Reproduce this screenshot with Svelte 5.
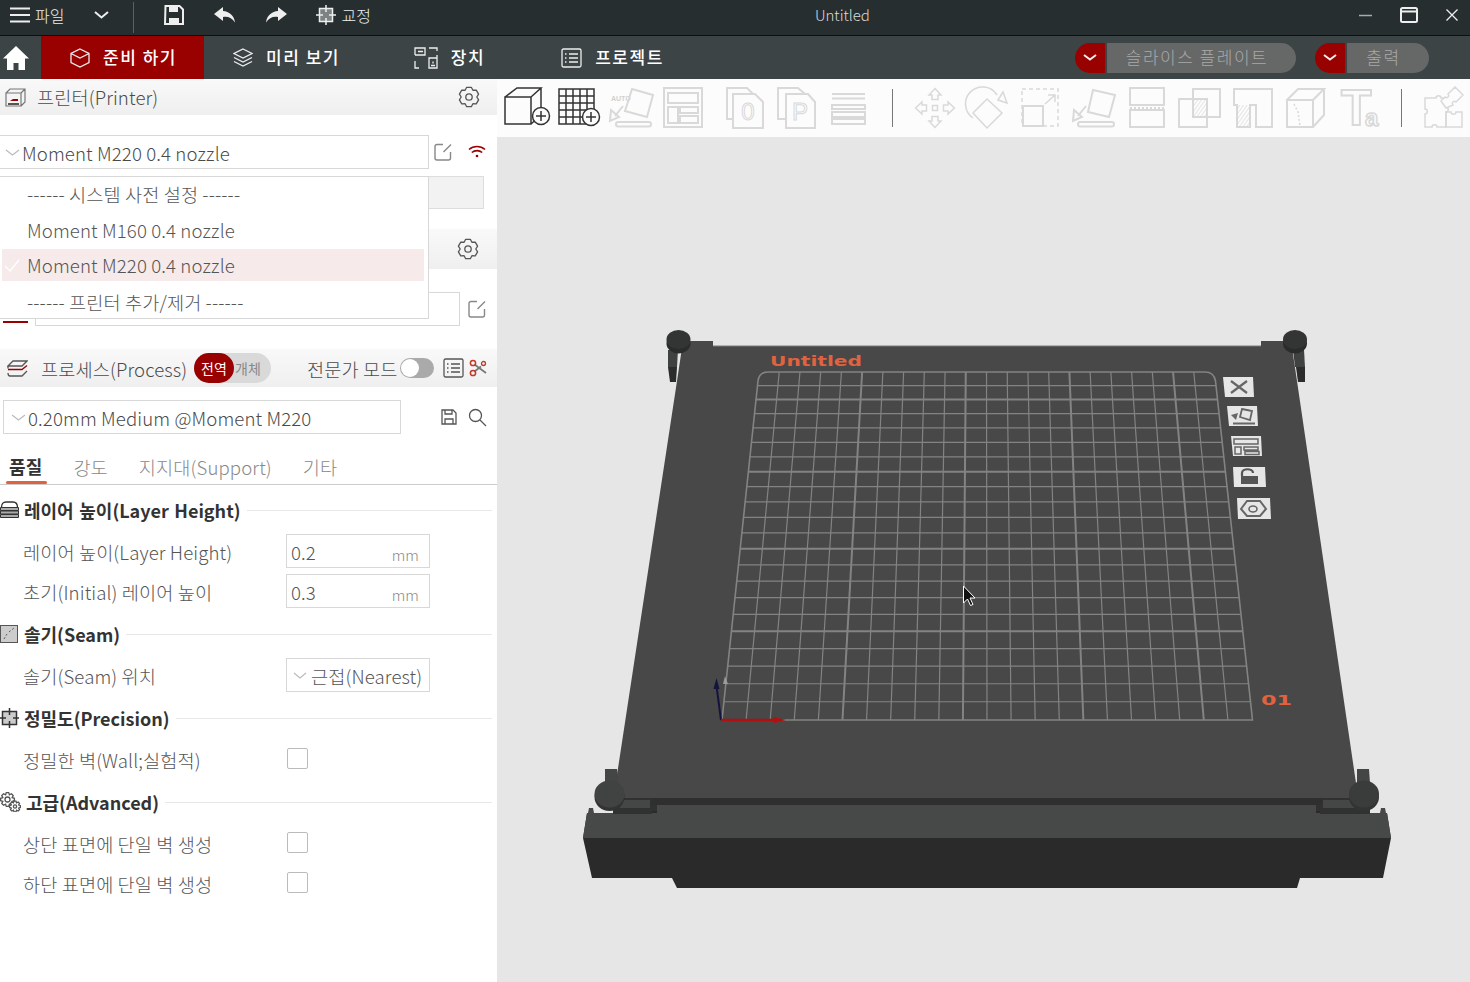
<script lang="ts">
  // build plate grid, perspective corrected between the far and near edge
  const far = { y: 372, l: 758.5, r: 1214.5 };
  const near = { y: 720, l: 722, r: 1252 };
  const cells = 22;
  const zf = 1 / (far.r - far.l);
  const zn = 1 / (near.r - near.l);

  function persp(a: number, b: number, s: number) {
    return ((1 - s) * a * zf + s * b * zn) / ((1 - s) * zf + s * zn);
  }

  const rows = Array.from({ length: cells - 1 }, (_, n) => {
    const s = (n + 1) / cells;
    return {
      y: persp(far.y, near.y, s),
      x1: persp(far.l, near.l, s),
      x2: persp(far.r, near.r, s),
      major: (cells - n - 1) % 5 === 0,
    };
  });
  const cols = Array.from({ length: cells - 1 }, (_, n) => {
    const s = (n + 1) / cells;
    return {
      x1: far.l + (far.r - far.l) * s,
      x2: near.l + (near.r - near.l) * s,
      major: (n + 1) % 5 === 0,
    };
  });

  function gear(cx: number, cy: number, R: number, r: number, n = 6) {
    let d = "";
    for (let i = 0; i < n; i++) {
      const a = (i * 2 * Math.PI) / n - Math.PI / 2;
      const w = Math.PI / n;
      const pts = [
        [r, a - w],
        [R, a - w * 0.45],
        [R, a + w * 0.45],
      ];
      pts.forEach(([rad, t], k) => {
        d += `${i === 0 && k === 0 ? "M" : "L"}${(cx + rad * Math.cos(t)).toFixed(2)} ${(cy + rad * Math.sin(t)).toFixed(2)} `;
      });
    }
    return d + "Z";
  }

  const presets = [
    { label: "------ 시스템 사전 설정 ------" },
    { label: "Moment M160 0.4 nozzle" },
    { label: "Moment M220 0.4 nozzle", selected: true },
    { label: "------ 프린터 추가/제거 ------" },
  ];

  const tabs = ["품질", "강도", "지지대(Support)", "기타"];
  const moveAngles = [0, 90, 180, 270];
</script>

{#snippet editIcon()}
  <svg class="ic" width="20" height="20" viewBox="0 0 20 20">
    <path class="gr" d="M10 2.5H4a2 2 0 0 0-2 2V16a2 2 0 0 0 2 2h11.5a2 2 0 0 0 2-2V10M18 2.5 10.5 10" />
  </svg>
{/snippet}

{#snippet gearIcon()}
  <svg class="ic" width="22" height="22" viewBox="0 0 22 22">
    <path class="dk round" d={gear(11, 11, 10, 7.8)} />
    <circle class="dk" cx="11" cy="11" r="3.2" />
  </svg>
{/snippet}

<div class="app">
  <header class="titlebar">
    <svg class="ic menu" width="20" height="16" viewBox="0 0 20 16">
      <path class="wh" d="M0 1.5H20M0 8H20M0 14.5H20" />
    </svg>
    <span class="file">파일</span>
    <svg class="ic file-arrow" width="15" height="8" viewBox="0 0 15 8">
      <path class="wh" d="M1 1l6.5 5.5L14 1" />
    </svg>
    <span class="title-sep"></span>
    <svg class="ic t-save" width="20" height="20" viewBox="0 0 20 20">
      <path class="wh" d="M1.5 1h14L19 4.5V19H1z" />
      <path d="M5 1h9v6H5zM5 13h10v6H5z" fill="#eee" />
    </svg>
    <svg class="ic t-undo" width="22" height="16" viewBox="0 0 22 16">
      <path d="M9 0 0 7l9 7v-4c5-1 9 1 12 5.5C20 8 15 4.5 9 4z" fill="#eee" />
    </svg>
    <svg class="ic t-redo" width="22" height="16" viewBox="0 0 22 16">
      <path d="M13 0l9 7-9 7v-4C8 9 4 11 1 15.5 2 8 7 4.5 13 4z" fill="#eee" />
    </svg>
    <svg class="ic t-cal" width="20" height="20" viewBox="0 0 20 20">
      <rect x="3.5" y="3.5" width="13" height="13" fill="#7d8283" stroke="#eee" stroke-width="1.5" />
      <path d="M10 0v7M10 13v7M0 10h7M13 10h7" stroke="#eee" stroke-width="1.5" />
    </svg>
    <span class="cal">교정</span>
    <span class="doc">Untitled</span>
    <div class="win">
      <svg class="ic" width="13" height="3" viewBox="0 0 13 3"><path d="M0 1.5H13" stroke="#aaa" stroke-width="1.5" /></svg>
      <svg class="ic" width="18" height="16" viewBox="0 0 18 16">
        <rect x="1" y="1" width="16" height="14" rx="1.5" class="wh" />
        <path d="M1 4.5H17" class="wh" />
      </svg>
      <svg class="ic" width="12" height="12" viewBox="0 0 12 12"><path class="wh thin" d="M.5.5l11 11M11.5.5l-11 11" /></svg>
    </div>
  </header>

  <nav class="tabbar">
    <div class="home">
      <svg class="ic" width="26" height="24" viewBox="0 0 26 24">
        <path d="M13 0 0 12.5h4V24h6.5v-7h5v7H22V12.5h4z" fill="#fff" />
      </svg>
    </div>
    <div class="tab active">
      <svg class="ic" width="20" height="20" viewBox="0 0 20 20">
        <path class="wh thin" d="M10 1 19 5.5V14.5L10 19 1 14.5V5.5zM1 5.5 10 10 19 5.5" />
      </svg>
      <span>준비 하기</span>
    </div>
    <div class="tab">
      <svg class="ic" width="20" height="20" viewBox="0 0 20 20">
        <path class="wh thin" d="M10 1 19 5.5 10 10 1 5.5zM1 9.5 10 14 19 9.5M1 13.5 10 18 19 13.5" />
      </svg>
      <span>미리 보기</span>
    </div>
    <div class="tab">
      <svg class="ic" width="24" height="22" viewBox="0 0 24 22">
        <path class="wh thin" d="M1 8V1h10v7H1M4 4.5h5M15 1h8v3M1 14v7h4M23 8v13H15V11h8M17 18.5h4M19 14.5v2" />
      </svg>
      <span>장치</span>
    </div>
    <div class="tab">
      <svg class="ic" width="21" height="20" viewBox="0 0 21 20">
        <rect class="wh thin" x="1" y="1" width="19" height="18" rx="1.5" />
        <path class="wh thin" d="M4 6h1.5M8 6h9M4 10h1.5M8 10h9M4 14h1.5M8 14h9" />
      </svg>
      <span>프로젝트</span>
    </div>
    <div class="actions">
      <div class="split slice">
        <span class="split-arrow"><svg class="ic" width="14" height="7" viewBox="0 0 14 7"><path class="wh" d="M1 1l6 4.5L13 1" /></svg></span>
        <span class="split-label">슬라이스 플레이트</span>
      </div>
      <div class="split print">
        <span class="split-arrow"><svg class="ic" width="14" height="7" viewBox="0 0 14 7"><path class="wh" d="M1 1l6 4.5L13 1" /></svg></span>
        <span class="split-label">출력</span>
      </div>
    </div>
  </nav>

  <div class="main">
    <aside class="sidebar">
      <div class="section-head printer-head">
        <svg class="ic" width="21" height="19" viewBox="0 0 21 19">
          <path class="gr2" d="M1 5h15v13H1zM1 5l4-4h15v13l-4 4M16 5l4-4" />
          <path d="M3 15h11v2H3z" fill="#555" />
          <path d="M5 13l3-2h5v2z" fill="#990000" />
        </svg>
        <span class="head-text">프린터(Printer)</span>
        <span class="head-gear">{@render gearIcon()}</span>
      </div>

      <div class="printer-row">
        <div class="select printer-select">
          <svg class="ic chev" width="15" height="7" viewBox="0 0 15 7"><path class="lg" d="M1 1l6.5 5L14 1" /></svg>
          <span>Moment M220 0.4 nozzle</span>
        </div>
        <span class="edit-slot">{@render editIcon()}</span>
        <svg class="ic wifi" width="18" height="13" viewBox="0 0 18 13">
          <path d="M1 4.5C5.5.5 12.5.5 17 4.5M3.8 7.5c3-2.5 7.4-2.5 10.4 0" fill="none" stroke="#990000" stroke-width="1.6" />
          <circle cx="9" cy="11" r="1.3" fill="#990000" />
        </svg>
      </div>

      <div class="plate-row"></div>

      <div class="section-head filament-head">
        <span class="head-gear">{@render gearIcon()}</span>
      </div>

      <div class="filament-row">
        <span class="swatch"></span>
        <div class="select filament-select"></div>
        <span class="edit-slot">{@render editIcon()}</span>
      </div>

      <div class="section-head process-head">
        <svg class="ic" width="21" height="18" viewBox="0 0 21 18">
          <path class="dk" d="M1 7 6 2h14l-5 5zM1 7v2.5" />
          <path d="M1 10.5h14l5-4" fill="none" stroke="#990000" stroke-width="1.4" />
          <path class="dk" d="M1 14c0 2 1 3 2 3h12l5-5" />
        </svg>
        <span class="head-text">프로세스(Process)</span>
        <div class="scope">
          <span class="scope-on">전역</span>
          <span class="scope-off">개체</span>
        </div>
        <span class="expert">전문가 모드</span>
        <span class="switch"><span class="knob"></span></span>
        <svg class="ic list" width="21" height="20" viewBox="0 0 21 20">
          <rect class="dk" x="1" y="1" width="19" height="18" rx="1.5" />
          <path class="dk" d="M4 6h1.5M8 6h9M4 10h1.5M8 10h9M4 14h1.5M8 14h9" />
        </svg>
        <svg class="ic" width="18" height="18" viewBox="0 0 18 18">
          <path d="M5.5 5.5 17 14M5.5 12.5 12 7.5" stroke="#777" stroke-width="1.6" fill="none" />
          <circle cx="4" cy="4" r="2.6" fill="none" stroke="#c0392b" stroke-width="1.5" />
          <circle cx="4" cy="14" r="2.6" fill="none" stroke="#c0392b" stroke-width="1.5" />
          <circle cx="14.5" cy="4.5" r="2" fill="none" stroke="#c0392b" stroke-width="1.3" />
        </svg>
      </div>

      <div class="preset-row">
        <div class="select preset-select">
          <svg class="ic chev" width="15" height="7" viewBox="0 0 15 7"><path class="lg" d="M1 1l6.5 5L14 1" /></svg>
          <span>0.20mm Medium @Moment M220</span>
        </div>
        <svg class="ic p-save" width="16" height="16" viewBox="0 0 16 16">
          <path class="dk" d="M1 1h11l3 3v11H1zM4 1v4h7V1M4 15v-5h8v5" />
        </svg>
        <svg class="ic p-search" width="19" height="19" viewBox="0 0 19 19">
          <circle class="dk" cx="7.5" cy="7.5" r="6" />
          <path class="dk" d="M12 12l6 6" />
        </svg>
      </div>

      <div class="tabs">
        {#each tabs as t, i}
          <span class="param-tab" class:on={i === 0}>{t}</span>
        {/each}
      </div>

      <div class="params">
        <section class="group">
          <h3>
            <svg class="ic" width="19" height="18" viewBox="0 0 19 18">
              <path class="dk strong" d="M1.5 6.5C1.5 3 3 1 6 1h7c3 0 4.5 2 4.5 5.5" />
              <path class="band" d="M.5 6.5h18v3H.5zM.5 10h18v3H.5zM.5 13.5h18v3H.5z" />
            </svg>
            <span>레이어 높이(Layer Height)</span><i></i>
          </h3>
          <div class="row">
            <label for="lh">레이어 높이(Layer Height)</label>
            <div class="field" id="lh"><span>0.2</span><small>mm</small></div>
          </div>
          <div class="row">
            <label for="ilh">초기(Initial) 레이어 높이</label>
            <div class="field" id="ilh"><span>0.3</span><small>mm</small></div>
          </div>
        </section>

        <section class="group">
          <h3>
            <svg class="ic" width="19" height="18" viewBox="0 0 19 18">
              <rect x=".5" y=".5" width="17" height="17" fill="#ccc" stroke="#555" />
              <path d="M4 14 7 9M9 7l5-4" stroke="#555" stroke-dasharray="2 2" fill="none" />
            </svg>
            <span>솔기(Seam)</span><i></i>
          </h3>
          <div class="row">
            <label for="seam">솔기(Seam) 위치</label>
            <div class="field combo" id="seam">
              <svg class="ic" width="14" height="7" viewBox="0 0 14 7"><path class="lg" d="M1 1l6 5 6-5" /></svg>
              <span>근접(Nearest)</span>
            </div>
          </div>
        </section>

        <section class="group">
          <h3>
            <svg class="ic" width="19" height="20" viewBox="0 0 19 20">
              <rect x="2.5" y="3.5" width="14" height="13" fill="#ccc" stroke="#333" stroke-width="1.5" />
              <path d="M9.5 0v7M9.5 13v7M0 10h6M13 10h6" stroke="#333" stroke-width="1.5" />
            </svg>
            <span>정밀도(Precision)</span><i></i>
          </h3>
          <div class="row">
            <label for="pw">정밀한 벽(Wall;실험적)</label>
            <span class="check" id="pw"></span>
          </div>
        </section>

        <section class="group">
          <h3>
            <svg class="ic adv" width="21" height="20" viewBox="0 0 21 20">
              <path class="dk" d={gear(7.5, 7.5, 7, 5, 8)} />
              <circle class="dk" cx="7.5" cy="7.5" r="2.5" />
              <path class="dk white" d={gear(15, 14.5, 5.5, 4, 8)} />
              <circle class="dk" cx="15" cy="14.5" r="1.6" />
            </svg>
            <span>고급(Advanced)</span><i></i>
          </h3>
          <div class="row">
            <label for="top">상단 표면에 단일 벽 생성</label>
            <span class="check" id="top"></span>
          </div>
          <div class="row">
            <label for="bottom">하단 표면에 단일 벽 생성</label>
            <span class="check" id="bottom"></span>
          </div>
        </section>
      </div>

      <ul class="dropdown">
        {#each presets as p}
          <li class:selected={p.selected}>
            {#if p.selected}
              <svg class="ic tick" width="16" height="13" viewBox="0 0 16 13"><path d="M1 7l5 5L15 1" fill="none" stroke="#fff" stroke-width="1.3" /></svg>
            {/if}
            <span>{p.label}</span>
          </li>
        {/each}
      </ul>
    </aside>

    <div class="workspace">
      <div class="toolbar">
        <svg class="tool" viewBox="0 0 52 44">
          <path class="k" d="M3 11h26v27H3zM3 11l12-9h24l-10 9M29 38l10-9V2" />
          <circle class="k white" cx="39" cy="30" r="8.5" />
          <path class="k" d="M34 30h10M39 25v10" />
        </svg>
        <svg class="tool" viewBox="0 0 52 44">
          <path class="k" d="M5 3h35v35H5zM12 3v35M19 3v35M26 3v35M33 3v35M5 10h35M5 17h35M5 24h35M5 31h35" />
          <circle class="k white" cx="37" cy="31" r="8.5" />
          <path class="k" d="M32 31h10M37 26v10" />
        </svg>
        <svg class="tool" viewBox="0 0 52 44">
          <text class="auto" x="5" y="15">AUTO</text>
          <path class="d" d="M26 3l21 6-6 22-22-6z" />
          <path class="d" d="M17 20 9 30" />
          <path class="d" d="M5 24l-1 11 9-4z" />
          <rect class="d" x="10" y="36" width="35" height="4.5" rx="2.2" />
        </svg>
        <svg class="tool" viewBox="0 0 52 44">
          <rect class="d" x="6" y="2" width="38" height="39" />
          <path class="d" d="M10 7h30v10H10zM10 21h10v16H10zM22 21h18v6H22zM22 30h18v7H22z" />
        </svg>
        <svg class="tool group-2" viewBox="0 0 52 44">
          <path class="d" d="M15 33H9V2h20l6 6" />
          <path class="d paper" d="M15 8h22l8 8v26H15z" />
          <text class="letter" x="30" y="34">0</text>
        </svg>
        <svg class="tool" viewBox="0 0 52 44">
          <path class="d" d="M15 33H8V2h20l7 6" />
          <path class="d paper" d="M16 8h22l7 8v26H16z" />
          <text class="letter" x="30" y="34">P</text>
        </svg>
        <svg class="tool" viewBox="0 0 52 44">
          <path class="d" d="M10 8h33M10 12.5h33M10 19h33v4H10zM10 26h33v5H10zM10 33h33v5H10z" />
        </svg>
        <span class="tool-sep"></span>
        <svg class="tool after-sep" viewBox="0 0 52 44">
          {#each moveAngles as a}
            <path class="d fine" d="M26 2.5l6 6.5h-3v4.5h-6V9h-3z" transform="rotate({a} 26 22)" />
          {/each}
          <rect class="d fine" x="23.5" y="19.5" width="5" height="5" />
        </svg>
        <svg class="tool second-set" viewBox="0 0 52 44">
          <defs>
            <pattern id="hatch" width="3" height="3" patternUnits="userSpaceOnUse" patternTransform="rotate(35)">
              <path d="M0 0V3" stroke="#cfcfcf" stroke-width="1" />
            </pattern>
          </defs>
          <path class="d fine" d="M11 32A17 17 0 1 1 35 9" />
          <path class="d fine" d="M36 14l5-8 4 11z" />
          <path class="d fine" d="M25 13 40 27 25 42 11 27z" />
        </svg>
        <svg class="tool second-set" viewBox="0 0 52 44">
          <path class="d dash" d="M7 3h36v37H7z" />
          <rect class="d" x="8" y="20" width="20" height="20" />
          <path class="d fine" d="M30 18l10-9M33 9h7v7" />
        </svg>
        <svg class="tool second-set" viewBox="0 0 52 44">
          <path class="d" d="M25 4l22 5-6 22-21-5z" />
          <path class="d" d="M18 20 10 30" />
          <path class="d" d="M6 24l-1 11 9-4z" />
          <rect class="d" x="10" y="36" width="36" height="4.5" rx="2.2" />
        </svg>
        <svg class="tool second-set" viewBox="0 0 52 44">
          <rect class="d" x="9" y="2" width="34" height="17" />
          <rect class="d" x="9" y="24" width="34" height="17" />
          <path class="d dots" d="M9 22h34" />
        </svg>
        <svg class="tool second-set" viewBox="0 0 52 44">
          <rect class="d" x="19" y="3" width="27" height="28" />
          <rect class="d" x="5" y="13" width="28" height="28" />
          <path d="M19 13h14v18H19z" fill="url(#hatch)" />
        </svg>
        <svg class="tool second-set" viewBox="0 0 52 44">
          <path class="d" d="M7 3h38v38H29V19h-6v22H10V19H7z" />
          <path d="M10 19h13v22H10z" fill="url(#hatch)" />
        </svg>
        <svg class="tool second-set" viewBox="0 0 52 44">
          <path class="d" d="M7 14h26v27H7zM7 14 18 3h26L33 14M33 41 44 29V3" />
          <path class="d dots fine" d="M14 18l4 8 2 14" />
        </svg>
        <svg class="tool second-set tall" viewBox="0 -10 52 64">
          <text class="big-t" x="8" y="39">T</text>
          <text class="small-a" x="32" y="40">a</text>
        </svg>
        <span class="tool-sep second"></span>
        <svg class="tool after-sep" viewBox="0 0 52 44">
          <path class="d fine" d="M7 12h11c0-3 5-3 5 0h5v9c3 0 3 5 0 5v15H19c0-3-5-3-5 0H7V28c3 0 3-5 0-5z" />
          <path class="d fine paper" d="M28 22 23 15l4-4c2 2 5-1 3-3l7-7 8 8-7 7c-2-2-5 1-3 3z" />
          <path class="d fine" d="M28 41V26h5c0 3 5 3 5 0h6v15z" />
        </svg>
      </div>

      <svg class="scene" viewBox="497 137 973 845" preserveAspectRatio="none">
        <!-- back stems -->
        <path d="M668 350h10l-1 17h-9z" fill="#404241" />
        <path d="M668 367h9l-1 15h-6z" fill="#2b2c2c" />
        <path d="M1293 350h11l1 17h-10z" fill="#404241" />
        <path d="M1296 367h9v15h-7z" fill="#2b2c2c" />

        <!-- base -->
        <path d="M587 813h65v-5h5v-3h659v3h4v5h67l4 25-8 40h-83l-3 10H677l-5-10h-80l-9-40z" fill="#292a29" />
        <path d="M587 813h70v-8h659v8h71l4 25H583z" fill="#474948" />
        <path d="M588 813l1-5h4l1 5zM1380 813l1-5h4l1 5z" fill="#474948" />

        <!-- bed plate -->
        <path d="M613 798h44v13h-5v3h-39zM1316 798h54v16h-50v-3h-4z" fill="#303231" />
        <path d="M651 798h671v7H651z" fill="#2e2f2e" />
        <path d="M620 800h30v8h-30zM1323 800h32v8h-32z" fill="#454746" />
        <path d="M683 341h30v5h548v-5h30l6 40 60 409v8H617v-23l60-394z" fill="#474847" />
        <path d="M713 346H1261" stroke="#7a7b7a" stroke-width="1" />

        <!-- knobs -->
        <ellipse cx="678.5" cy="343.5" rx="12" ry="10" fill="#2a2b2b" />
        <ellipse cx="678.5" cy="339.5" rx="12" ry="9.5" fill="#333534" />
        <ellipse cx="1295" cy="343.5" rx="12" ry="10" fill="#2a2b2b" />
        <ellipse cx="1295" cy="339.5" rx="12" ry="9.5" fill="#333534" />
        <path d="M605 769h12l2 14h-14zM1357 769h12l1 14h-13z" fill="#444645" />
        <ellipse cx="609.5" cy="797" rx="15" ry="14" fill="#323433" />
        <ellipse cx="609.5" cy="794" rx="15" ry="13.5" fill="#414342" />
        <ellipse cx="1364" cy="797" rx="15" ry="14" fill="#323433" />
        <ellipse cx="1364" cy="794" rx="15" ry="13.5" fill="#3a3c3b" />

        <!-- grid -->
        <g fill="none" stroke="#828482">
          {#each rows as r}
            <path d="M{r.x1} {r.y}H{r.x2}" stroke-width={r.major ? 2 : 1.2} />
          {/each}
          {#each cols as c}
            <path d="M{c.x1} {far.y}L{c.x2} {near.y}" stroke-width={c.major ? 2 : 1.2} />
          {/each}
          <path d="M768 372H1205Q1214 372 1215.5 381L1252.5 720H722L758 381Q759 372 768 372Z" stroke-width="1.6" />
        </g>

        <text class="plate-name" x="770" y="366" textLength="92" lengthAdjust="spacingAndGlyphs">Untitled</text>
        <text class="plate-name" x="1261" y="705" textLength="31" lengthAdjust="spacingAndGlyphs">01</text>

        <!-- axes -->
        <path d="M725 676l-2 8h5z" fill="#9a9c9b" />
        <path d="M721 720 716.5 686" stroke="#14143c" stroke-width="2" />
        <path d="M716.5 678l-3 11h6z" fill="#14143c" />
        <path d="M721 720H778" stroke="#b40f0f" stroke-width="2.4" />
        <path d="M786 720l-12-3v6z" fill="#b40f0f" />

        <!-- plate buttons -->
        <path d="M1223 377h30l1 20h-29z" fill="#e6e6e6" />
        <path d="M1231 381l16 12M1247 381l-16 12" stroke="#666" stroke-width="2.2" />
        <path d="M1227 406h30l1 20h-29z" fill="#e6e6e6" />
        <path d="M1242 409l10 2-2 9-10-3zM1233 423.5h22" stroke="#666" stroke-width="1.8" fill="none" />
        <path d="M1231 415l7-2-2 7z" fill="#666" />
        <path d="M1231 436h30l1 20h-29z" fill="#e6e6e6" />
        <path d="M1234 439h24v5h-24zM1235 447h6v7h-6zM1244 447h14v3h-14zM1245 451.5h14v3h-14z" stroke="#666" stroke-width="1.5" fill="none" />
        <path d="M1233 467h32l1 20h-32z" fill="#e6e6e6" />
        <path d="M1242 476v-3c0-5 11-5 11 0" stroke="#555" stroke-width="2.2" fill="none" />
        <path d="M1241 476h17v8h-17z" fill="#555" />
        <path d="M1237 498h33l1 21h-33z" fill="#e6e6e6" />
        <path d="M1241 509l6-8h13l6 8-6 7h-13z" stroke="#666" stroke-width="2" fill="none" />
        <ellipse cx="1253" cy="509" rx="4" ry="3" stroke="#666" stroke-width="1.6" fill="none" />

        <!-- mouse pointer -->
        <path d="M963.5 586v17l4-4 3 6.5 2.5-1-3-6.5h5z" fill="#111" stroke="#fff" stroke-width="1" />
      </svg>
    </div>
  </div>
</div>

<style>
  :global(body) {
    margin: 0;
    overflow: hidden;
  }
  .app {
    width: 1470px;
    height: 982px;
    display: flex;
    flex-direction: column;
    overflow: hidden;
    background: #fff;
    color: #4a4a4a;
    font-family: "Noto Sans CJK KR", "Noto Sans", sans-serif;
    font-weight: 300;
  }
  .ic {
    display: block;
    flex-shrink: 0;
  }
  .wh {
    fill: none;
    stroke: #eee;
    stroke-width: 2;
  }
  .wh.thin {
    stroke-width: 1.3;
  }
  .dk {
    fill: none;
    stroke: #555;
    stroke-width: 1.3;
  }
  .dk.strong {
    stroke: #333;
  }
  .white {
    fill: #fff;
  }
  .band {
    fill: #aaa;
    stroke: #333;
    stroke-width: 1;
  }
  .round {
    stroke-linejoin: round;
  }
  .gr {
    fill: none;
    stroke: #888;
    stroke-width: 1.4;
  }
  .gr2 {
    fill: #f4f4f4;
    stroke: #777;
    stroke-width: 1.2;
  }
  .lg {
    fill: none;
    stroke: #bbb;
    stroke-width: 1.2;
  }

  .titlebar {
    box-sizing: border-box;
    height: 36px;
    flex-shrink: 0;
    padding-bottom: 5px;
    border-bottom: 1px solid #0d0f10;
    background: #272e30;
    display: flex;
    align-items: center;
    color: #eee;
    font-size: 16px;
  }
  .menu {
    margin-left: 10px;
  }
  .file {
    margin-left: 5px;
  }
  .file-arrow {
    margin-left: 30px;
  }
  .title-sep {
    width: 1px;
    height: 31px;
    margin: 5px 0 0 24px;
    background: #5a6163;
  }
  .t-save {
    margin-left: 30px;
  }
  .t-undo {
    margin-left: 30px;
  }
  .t-redo {
    margin-left: 29px;
  }
  .t-cal {
    margin-left: 29px;
  }
  .cal {
    margin-left: 5px;
  }
  .doc {
    margin-left: 444px;
    padding-bottom: 1px;
    font-size: 15px;
    color: #ddd;
  }
  .win {
    margin-left: auto;
    margin-right: 12px;
    display: flex;
    align-items: center;
    gap: 28px;
  }

  .tabbar {
    height: 43px;
    flex-shrink: 0;
    background: #3c4446;
    display: flex;
    align-items: stretch;
  }
  .home {
    width: 41px;
    display: flex;
    align-items: center;
    justify-content: center;
    padding-right: 9px;
    box-sizing: border-box;
  }
  .tab {
    box-sizing: border-box;
    width: 163px;
    padding-left: 2px;
    display: flex;
    align-items: center;
    justify-content: center;
    gap: 13px;
    color: #fff;
    font-size: 17px;
    font-weight: 500;
    letter-spacing: 1.5px;
  }
  .tab span,
  .split-label {
    padding-bottom: 2px;
    box-sizing: border-box;
  }
  .tab.active {
    background: #990000;
  }
  .actions {
    margin-left: auto;
    margin-right: 41px;
    display: flex;
    align-items: center;
    gap: 19px;
  }
  .split {
    display: flex;
    height: 30px;
    gap: 2px;
    font-size: 17px;
    letter-spacing: 1.5px;
    color: #a9a9a9;
  }
  .split-arrow {
    width: 30px;
    border-radius: 15px 0 0 15px;
    background: #990000;
    display: flex;
    align-items: center;
    justify-content: center;
  }
  .split-label {
    border-radius: 0 15px 15px 0;
    background: #666868;
    display: flex;
    align-items: center;
    justify-content: center;
    padding-right: 9px;
  }
  .slice .split-label {
    width: 189px;
  }
  .print .split-label {
    width: 82px;
  }

  .main {
    flex: 1;
    display: flex;
    min-height: 0;
  }
  .sidebar {
    position: relative;
    width: 497px;
    flex-shrink: 0;
    background: #fff;
    font-size: 18.6px;
    letter-spacing: 0.12px;
    line-height: 25px;
  }
  .section-head {
    display: flex;
    align-items: center;
    background: linear-gradient(#f9f9f9, #efefef);
  }
  .printer-head {
    height: 36px;
    padding-left: 5px;
  }
  .printer-head .head-text {
    margin-left: 11px;
    padding-bottom: 2px;
  }
  .head-gear {
    margin-left: auto;
    margin-right: 17px;
  }
  .printer-row {
    display: flex;
    align-items: center;
    height: 34px;
    margin-top: 20px;
  }
  .select {
    box-sizing: border-box;
    height: 34px;
    border: 1px solid #d8d8d8;
    display: flex;
    align-items: center;
  }
  .printer-select {
    width: 429px;
    border-left: 0;
    padding-left: 5px;
    gap: 2px;
  }
  .edit-slot {
    margin: 0 0 0 4px;
  }
  .wifi {
    margin-left: 15px;
    margin-top: -2px;
  }
  .plate-row {
    box-sizing: border-box;
    width: 484px;
    height: 33px;
    margin-top: 7px;
    background: #f2f2f2;
    border: 1px solid #ddd;
  }
  .filament-head {
    height: 40px;
    margin-top: 20px;
  }
  .filament-head .head-gear {
    margin-right: 18px;
  }
  .filament-row {
    display: flex;
    align-items: center;
    height: 34px;
    margin-top: 23px;
    padding-left: 3px;
  }
  .swatch {
    width: 25px;
    height: 2px;
    margin-top: 25px;
    background: #990000;
  }
  .filament-select {
    width: 425px;
    margin-left: 7px;
  }
  .filament-row .edit-slot {
    margin-left: 7px;
  }
  .process-head {
    height: 38px;
    margin-top: 23px;
    padding-left: 7px;
  }
  .process-head .head-text {
    margin-left: 13px;
    width: 153px;
    white-space: nowrap;
  }
  .scope {
    width: 77px;
    height: 30px;
    border-radius: 15px;
    background: #d9d9d9;
    display: flex;
    align-items: center;
    font-size: 14px;
    color: #888;
  }
  .scope-on {
    width: 40px;
    height: 30px;
    border-radius: 15px;
    background: #990000;
    color: #fff;
    display: flex;
    align-items: center;
    justify-content: center;
    font-weight: 400;
  }
  .scope-off {
    margin-left: 1px;
    font-weight: 400;
  }
  .expert {
    width: 89px;
    margin-left: 36px;
    white-space: nowrap;
  }
  .switch {
    position: relative;
    margin-left: 4px;
    width: 34px;
    height: 20px;
    border-radius: 10px;
    background: #aaa;
  }
  .knob {
    position: absolute;
    left: 1px;
    top: 1px;
    width: 18px;
    height: 18px;
    border-radius: 50%;
    background: #fff;
  }
  .list {
    margin-left: 9px;
    margin-right: 5px;
  }
  .preset-row {
    display: flex;
    align-items: center;
    height: 34px;
    margin-top: 13px;
    padding-left: 3px;
  }
  .preset-select {
    width: 398px;
    padding-left: 7px;
    gap: 2px;
  }
  .p-save {
    margin-left: 40px;
  }
  .p-search {
    margin-left: 11px;
  }

  .tabs {
    height: 35px;
    border-bottom: 1px solid #ccc;
    display: flex;
    align-items: center;
    padding: 15px 0 0 9px;
    gap: 31px;
    color: #888;
  }
  .param-tab {
    position: relative;
    white-space: nowrap;
  }
  .param-tab.on {
    font-size: 18px;
    font-weight: 700;
    color: #333;
  }
  .param-tab.on::after {
    content: "";
    position: absolute;
    left: -3px;
    right: -5px;
    bottom: -5px;
    height: 3px;
    border-radius: 1.5px;
    background: #e0623e;
  }
  .params {
    padding-top: 6px;
  }
  .group {
    margin-bottom: 4px;
  }
  h3 {
    box-sizing: border-box;
    height: 40px;
    margin: 0;
    padding-bottom: 2px;
    display: flex;
    align-items: center;
    gap: 5px;
    font-size: 18px;
    font-weight: 700;
    color: #333;
    letter-spacing: 0;
    word-spacing: 1.5px;
    white-space: nowrap;
  }
  h3 i {
    flex: 1;
    height: 1px;
    margin: 0 5px 0 1px;
    background: #e8e8e8;
  }
  .row {
    height: 40px;
    display: flex;
    align-items: center;
    padding-left: 23px;
  }
  label {
    width: 263px;
    color: #555;
    white-space: nowrap;
  }
  .field {
    box-sizing: border-box;
    width: 144px;
    height: 34px;
    border: 1px solid #d8d8d8;
    display: flex;
    align-items: center;
    padding: 0 10px 0 4px;
    color: #555;
  }
  .field small {
    margin-left: auto;
    margin-top: 6px;
    font-size: 15px;
    color: #888;
  }
  .combo {
    padding: 0 0 0 6px;
    gap: 4px;
    white-space: nowrap;
  }
  .check {
    box-sizing: border-box;
    width: 21px;
    height: 21px;
    margin: -2px 0 0 1px;
    border: 1.5px solid #bbb;
    border-radius: 2px;
  }

  .dropdown {
    position: absolute;
    left: 0;
    top: 97px;
    box-sizing: border-box;
    width: 429px;
    height: 143px;
    margin: 0;
    padding: 0 4px 0 2px;
    list-style: none;
    background: #fff;
    border: 1px solid #d8d8d8;
    border-left: 0;
    color: #555;
  }
  .dropdown li {
    position: relative;
    box-sizing: border-box;
    height: 36px;
    padding: 0 0 4px 25px;
    display: flex;
    align-items: center;
    white-space: nowrap;
  }
  .dropdown li.selected {
    height: 32px;
    margin: 0 0 4px;
    padding-bottom: 1px;
    background: #f6eaea;
  }
  .tick {
    position: absolute;
    left: 2px;
    top: 10px;
  }

  .workspace {
    flex: 1;
    display: flex;
    flex-direction: column;
    min-width: 0;
    background: #e6e6e6;
  }
  .toolbar {
    height: 58px;
    flex-shrink: 0;
    background: #fcfcfc;
    display: flex;
    align-items: center;
    padding-left: 5px;
    box-sizing: border-box;
  }
  .tool {
    display: block;
    width: 52px;
    height: 44px;
    flex-shrink: 0;
  }
  .tool.tall {
    height: 64px;
    margin-top: -3px;
    margin-bottom: -3px;
  }
  .group-2 {
    margin-left: 8px;
  }
  .after-sep {
    margin-left: 16px;
  }
  .second-set {
    margin-left: 1px;
  }
  .tool-sep {
    width: 1px;
    height: 38px;
    margin-left: 18px;
    background: #777;
    flex-shrink: 0;
  }
  .tool-sep.second {
    margin-left: 16px;
  }
  .k {
    fill: none;
    stroke: #333;
    stroke-width: 1.5;
  }
  .d {
    fill: none;
    stroke: #d9d9d9;
    stroke-width: 2;
  }
  .k.white {
    fill: #fcfcfc;
  }
  .d.paper {
    fill: #fcfcfc;
  }
  .d.fine {
    stroke-width: 1.5;
  }
  .dash {
    stroke-dasharray: 4 3;
    stroke-width: 1.5;
  }
  .dots {
    stroke-dasharray: 2 2;
  }
  .auto {
    font-size: 7px;
    font-weight: 700;
    fill: #d0d0d0;
    font-family: "Liberation Sans", sans-serif;
  }
  .letter {
    font-size: 24px;
    fill: #fcfcfc;
    stroke: #d9d9d9;
    stroke-width: 1;
    text-anchor: middle;
    font-family: "Liberation Sans", sans-serif;
  }
  .big-t {
    font-size: 50px;
    fill: #fcfcfc;
    stroke: #d9d9d9;
    stroke-width: 2;
    font-weight: 700;
    font-family: "Liberation Sans", sans-serif;
  }
  .small-a {
    font-size: 24px;
    fill: #fcfcfc;
    stroke: #d9d9d9;
    stroke-width: 1.5;
    font-weight: 700;
    font-family: "Liberation Sans", sans-serif;
  }
  .scene {
    flex: 1;
    display: block;
    width: 100%;
    min-height: 0;
  }
  .plate-name {
    fill: #e0623e;
    font-size: 14px;
    font-weight: 700;
    font-family: "DejaVu Sans", sans-serif;
  }
</style>
